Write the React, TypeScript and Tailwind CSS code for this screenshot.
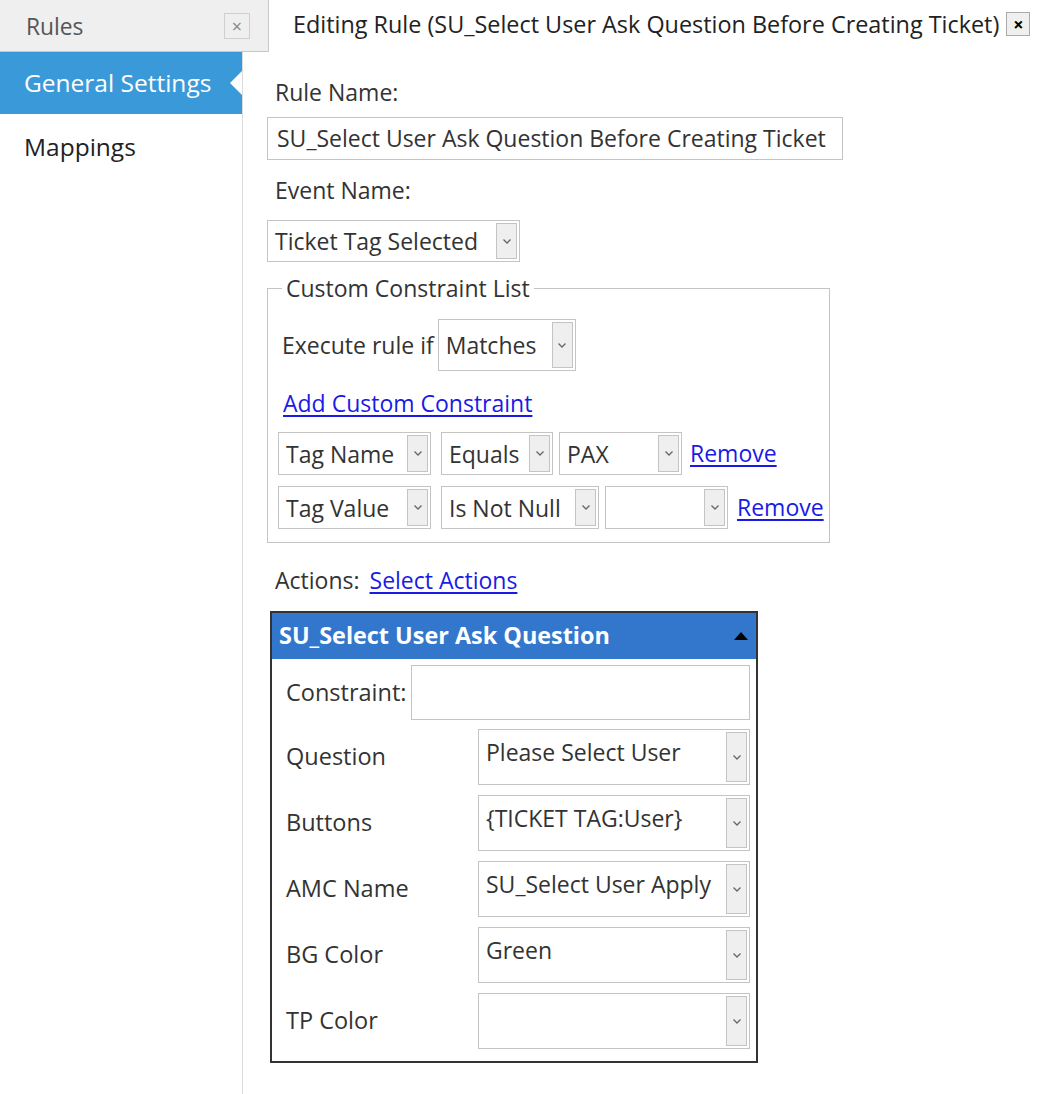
import React from "react";

const FONT = { fontFamily: '"Open Sans", "Noto Sans", sans-serif' };

function Chevron() {
  return (
    <svg width="10" height="7" viewBox="0 0 10 7" fill="none">
      <path d="M1.5 1.5 L5 5 L8.5 1.5" stroke="#666" strokeWidth="1.3" />
    </svg>
  );
}

function Select({
  value,
  w,
  h,
  top = false,
}: {
  value: string;
  w: string;
  h: string;
  top?: boolean;
}) {
  return (
    <div className={`flex border border-[#c4c4c4] bg-white ${w} ${h}`}>
      <div
        className={`flex-1 pl-[7px] text-[23px] text-[#333] whitespace-nowrap overflow-hidden ${
          top ? "pt-[6px] leading-[32px]" : "flex items-center leading-[30px]"
        }`}
      >
        {value}
      </div>
      <div className="w-[21px] shrink-0 my-[2px] mr-[2px] border border-[#c4c4c4] bg-[#efefef] flex items-center justify-center">
        <Chevron />
      </div>
    </div>
  );
}

function Link({ children }: { children: React.ReactNode }) {
  return (
    <span className="text-[23px] leading-[28px] text-[#1a1ae6] underline underline-offset-[3px]">{children}</span>
  );
}

function ActionRow({ label, value }: { label: string; value: string }) {
  return (
    <div className="flex items-center">
      <div className="w-[192px] text-[23.5px] text-[#333]">{label}</div>
      <Select value={value} w="w-[272px]" h="h-[56px]" top />
    </div>
  );
}

export default function App() {
  return (
    <div className="w-[1048px] h-[1094px] bg-white flex flex-col overflow-hidden" style={FONT}>
      {/* top bar */}
      <div className="flex h-[52px] shrink-0">
        <div className="w-[269px] h-[52px] bg-[#efefef] border-r border-b border-[#c8c8c8] flex items-center pl-[26px] pr-[18px] justify-between">
          <span className="text-[22.8px] text-[#555] pt-[3px]">Rules</span>
          <span className="w-[26px] h-[26px] border border-[#cfcfcf] flex items-center justify-center text-[#888] text-[18px] leading-none">
            ×
          </span>
        </div>
        <div className="flex-1 flex items-start pt-[7px] pl-[24px]">
          <span className="text-[23.4px] leading-[34px] text-[#222] whitespace-nowrap">
            Editing Rule (SU_Select User Ask Question Before Creating Ticket)
          </span>
          <span className="ml-[7px] mt-[5px] w-[24px] h-[24px] shrink-0 bg-[#efefef] border border-[#aaa] flex items-center justify-center text-[18px] font-bold text-black leading-none">
            ×
          </span>
        </div>
      </div>

      <div className="flex flex-1">
        {/* sidebar */}
        <div className="w-[243px] shrink-0 border-r border-[#dcdcdc]">
          <div className="relative h-[62px] bg-[#3a9ad9] flex items-center pl-[24px] text-[24.5px] text-white">
            General Settings
            <div className="absolute right-0 top-[19px] w-0 h-0 border-y-[12px] border-y-transparent border-r-[12px] border-r-white" />
          </div>
          <div className="h-[66px] flex items-center pl-[24px] text-[24.5px] text-[#222]">Mappings</div>
        </div>

        {/* content */}
        <div className="flex-1 pl-[24px] pt-[26px] text-[#333]">
          <div className="text-[23px] leading-[28px] pl-[8px]">Rule Name:</div>
          <div className="mt-[11px] w-[576px] h-[43px] border border-[#c4c4c4] flex items-center pl-[9px] text-[23px] whitespace-nowrap overflow-hidden">
            SU_Select User Ask Question Before Creating Ticket
          </div>
          <div className="mt-[16px] text-[23px] leading-[28px] pl-[8px]">Event Name:</div>
          <div className="mt-[16px]">
            <Select value="Ticket Tag Selected" w="w-[253px]" h="h-[42px]" />
          </div>

          <fieldset className="mt-[12px] w-[563px] min-w-0 border border-[#c4c4c4] pl-[10px] pr-[2px] pb-[13px] pt-[17px]">
            <legend className="ml-[4px] px-[4px] text-[23px] leading-[28px]">Custom Constraint List</legend>
            <div className="flex items-center">
              <span className="text-[23px] pl-[4px] pr-[4px] whitespace-nowrap">Execute rule if</span>
              <Select value="Matches" w="w-[138px]" h="h-[52px]" />
            </div>
            <div className="mt-[18px] pl-[5px] leading-[28px]">
              <Link>Add Custom Constraint</Link>
            </div>
            <div className="mt-[12px] flex items-center">
              <Select value="Tag Name" w="w-[153px]" h="h-[43px]" />
              <div className="ml-[10px]">
                <Select value="Equals" w="w-[112px]" h="h-[43px]" />
              </div>
              <div className="ml-[6px]">
                <Select value="PAX" w="w-[123px]" h="h-[43px]" />
              </div>
              <div className="ml-[8px]">
                <Link>Remove</Link>
              </div>
            </div>
            <div className="mt-[11px] flex items-center">
              <Select value="Tag Value" w="w-[153px]" h="h-[43px]" />
              <div className="ml-[10px]">
                <Select value="Is Not Null" w="w-[158px]" h="h-[43px]" />
              </div>
              <div className="ml-[6px]">
                <Select value="" w="w-[123px]" h="h-[43px]" />
              </div>
              <div className="ml-[9px]">
                <Link>Remove</Link>
              </div>
            </div>
          </fieldset>

          <div className="mt-[23px] pl-[8px] flex items-center leading-[28px]">
            <span className="text-[23px] mr-[10px]">Actions:</span>
            <Link>Select Actions</Link>
          </div>

          <div className="mt-[17px] ml-[3px] w-[488px] border-2 border-[#333]">
            <div className="h-[46px] bg-[#3377cc] flex items-center justify-between pl-[7px] pr-[8px]">
              <span className="text-[23.4px] font-bold text-white whitespace-nowrap">SU_Select User Ask Question</span>
              <svg width="14" height="8" viewBox="0 0 14 8">
                <path d="M0 8 L7 0 L14 8 Z" fill="#000" />
              </svg>
            </div>
            <div className="pl-[14px] pr-[6px] pt-[6px] pb-[12px] flex flex-col">
              <div className="flex items-center">
                <div className="w-[125px] text-[23.5px]">Constraint:</div>
                <div className="w-[339px] h-[55px] border border-[#c4c4c4]" />
              </div>
              <div className="mt-[9px] flex flex-col gap-[10px]">
                <ActionRow label="Question" value="Please Select User" />
                <ActionRow label="Buttons" value="{TICKET TAG:User}" />
                <ActionRow label="AMC Name" value="SU_Select User Apply" />
                <ActionRow label="BG Color" value="Green" />
                <ActionRow label="TP Color" value="" />
              </div>
            </div>
          </div>
        </div>
      </div>
    </div>
  );
}
